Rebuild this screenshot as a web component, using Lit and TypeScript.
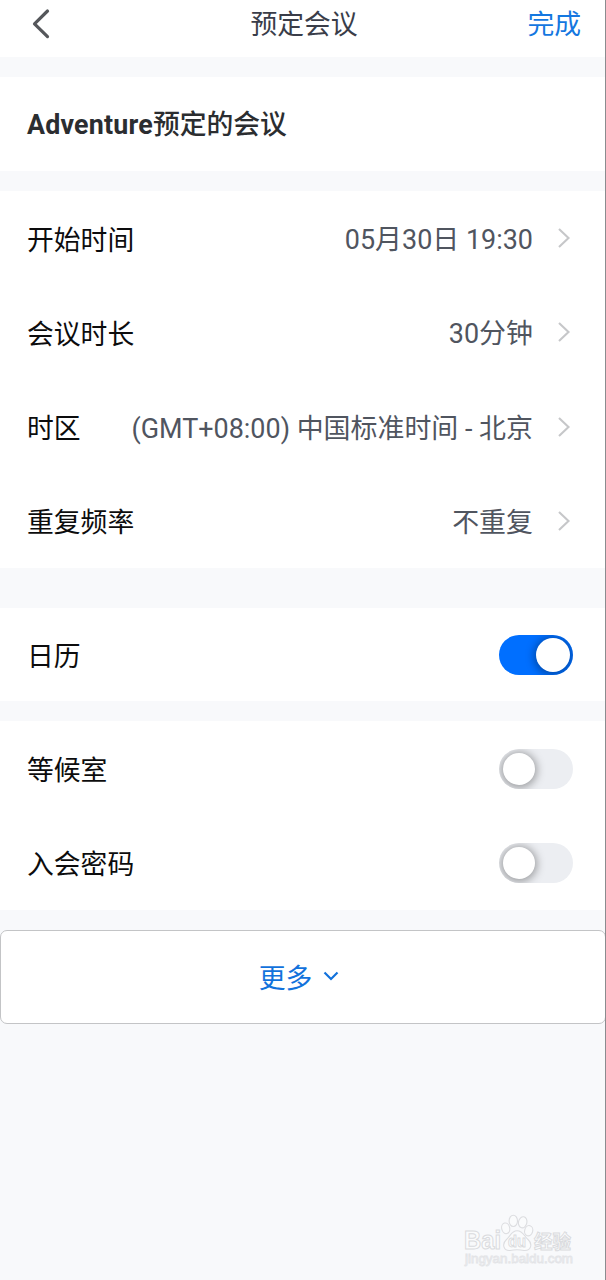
import { LitElement, html, css, svg } from "lit";
import { customElement, property } from "lit/decorators.js";

const fontStack = css`Roboto, "Noto Sans CJK SC", sans-serif`;

@customElement("setting-row")
class SettingRow extends LitElement {
  @property() label = "";
  @property() value = "";

  static styles = css`
    :host { display: flex; align-items: center; height: 94.25px; padding: 0 35px 0 27px; box-sizing: border-box; }
    .label { color: #0c0c0d; flex: 1; white-space: nowrap; padding-top: 5px; }
    .value { color: #50555f; white-space: nowrap; padding-top: 4px; font-size: 26.95px; }
    .chevron { width: 14px; height: 22px; margin-left: 24px; display: block; }
  `;

  render() {
    return html`
      <span class="label">${this.label}</span>
      <span class="value">${this.value}</span>
      <svg class="chevron" viewBox="0 0 14 22">
        <path d="M2 2 L11.5 11 L2 20" fill="none" stroke="#c6c7c9" stroke-width="2.1" />
      </svg>
    `;
  }
}

@customElement("toggle-row")
class ToggleRow extends LitElement {
  @property() label = "";
  @property({ type: Boolean, reflect: true }) on = false;

  static styles = css`
    :host { display: flex; align-items: center; justify-content: space-between; height: 94px; padding: 0 33px 0 27px; box-sizing: border-box; }
    .label { color: #0c0c0d; padding-top: 3px; }
    .track { display: flex; align-items: center; width: 74px; height: 40px; border-radius: 20px; background: #eceef2; overflow: hidden; box-sizing: border-box; padding: 0 4px; }
    .knob { width: 32px; height: 32px; border-radius: 50%; background: #fff; box-shadow: 0 1px 8px 2px rgba(0, 0, 0, 0.34); }
    :host([on]) .track { background: #006fff; justify-content: flex-end; padding: 0 3px; }
    :host([on]) .knob { width: 34px; height: 34px; }
  `;

  render() {
    return html`
      <span class="label">${this.label}</span>
      <span class="track"><span class="knob"></span></span>
    `;
  }
}

@customElement("app-root")
class AppRoot extends LitElement {
  static styles = css`
    :host {
      display: flex; flex-direction: column; position: relative; box-sizing: border-box;
      width: 606px; height: 1280px; overflow: hidden; background: #f8f9fb;
      font-family: ${fontStack}; font-size: 26.8px; line-height: 40px;
    }
    .edge { position: absolute; top: 0; right: 0; bottom: 0; width: 1px; background: #8b8c8f; }
    .header { display: grid; grid-template-columns: 1fr auto 1fr; align-items: center; height: 57px; padding: 0 25px 8px 27px; box-sizing: border-box; background: #fff; }
    .back { width: 26px; height: 34px; display: block; }
    .title { color: #3a3d49; }
    .done { color: #1477e0; justify-self: end; }
    .subject { display: flex; align-items: center; margin-top: 20px; height: 94px; padding: 1px 27px 0; box-sizing: border-box; background: #fff; color: #2b2d30; font-weight: 700; }
    .subject .latin { letter-spacing: 0.2px; }
    .subject .cjk { font-weight: 500; }
    .group { background: #fff; margin-top: 20px; }
    .group.calendar { margin-top: 40px; height: 93px; }
    .group.access { box-sizing: border-box; height: 189px; padding-top: 1px; }
    .more { display: flex; align-items: center; justify-content: center; gap: 11px; margin-top: 20px; height: 94px; box-sizing: border-box; border: 1px solid #c3c4c6; border-radius: 7px; background: #fff; color: #1272dc; padding: 4px 8px 0 0; }
    .more svg { width: 16px; height: 10px; margin-top: -7px; }
    .watermark { position: absolute; left: 460px; top: 1212px; width: 120px; height: 60px; }
  `;

  private watermark() {
    return svg`
      <g fill="#fafbfc" stroke="#dcdde0" stroke-width="1.1">
        <ellipse cx="45.7" cy="16.3" rx="4" ry="5.4" transform="rotate(-12 45.7 16.3)" />
        <ellipse cx="53.3" cy="8.9" rx="4.2" ry="5.6" />
        <ellipse cx="62.7" cy="10.3" rx="4.2" ry="5.6" transform="rotate(12 62.7 10.3)" />
        <ellipse cx="68.7" cy="18.7" rx="4" ry="5.2" transform="rotate(15 68.7 18.7)" />
        <path d="M57 18.700 C51.500 18.700 50.500 24 46.500 27.500 C41.500 32 43.500 39 50 38.500 C55 37.500 59 37.500 64 38.500 C71 39 73 32 68 27.500 C64 24 63 18.700 57 18.700 Z" />
      </g>
      <g fill="#fafbfc" stroke="#dadbde" stroke-width="1" font-family="Liberation Sans, sans-serif" font-weight="700">
        <text x="4" y="37.300" font-size="25" textLength="37" lengthAdjust="spacingAndGlyphs">Bai</text>
        <text x="48" y="34.700" font-size="17" textLength="18" lengthAdjust="spacingAndGlyphs">du</text>
        <text x="74" y="36.500" font-size="19" font-family="Noto Sans CJK SC, sans-serif" textLength="37" lengthAdjust="spacingAndGlyphs">经验</text>
        <text x="5" y="51" font-size="12" font-weight="400" stroke="#e3e4e7" stroke-width="0.8" textLength="108" lengthAdjust="spacingAndGlyphs">jingyan.baidu.com</text>
      </g>
    `;
  }

  render() {
    return html`
      <header class="header">
        <svg class="back" viewBox="0 0 26 34">
          <path d="M20.500 3 L7.500 15.800 L20.500 28.600" fill="none" stroke="#55575b" stroke-width="3.200" stroke-linecap="round" stroke-linejoin="round" />
        </svg>
        <span class="title">预定会议</span>
        <span class="done">完成</span>
      </header>
      <section class="subject"><span class="latin">Adventure</span><span class="cjk">预定的会议</span></section>
      <section class="group">
        <setting-row label="开始时间" value="05月30日 19:30"></setting-row>
        <setting-row label="会议时长" value="30分钟"></setting-row>
        <setting-row label="时区" value="(GMT+08:00) 中国标准时间 - 北京"></setting-row>
        <setting-row label="重复频率" value="不重复"></setting-row>
      </section>
      <section class="group calendar"><toggle-row label="日历" on></toggle-row></section>
      <section class="group access">
        <toggle-row label="等候室"></toggle-row>
        <toggle-row label="入会密码"></toggle-row>
      </section>
      <section class="more">
        <span>更多</span>
        <svg viewBox="0 0 16 10"><path d="M1.500 1.500 L8 8 L14.500 1.500" fill="none" stroke="#1272dc" stroke-width="2.200" /></svg>
      </section>
      <svg class="watermark" viewBox="0 0 120 60">${this.watermark()}</svg>
      <div class="edge"></div>
    `;
  }
}
